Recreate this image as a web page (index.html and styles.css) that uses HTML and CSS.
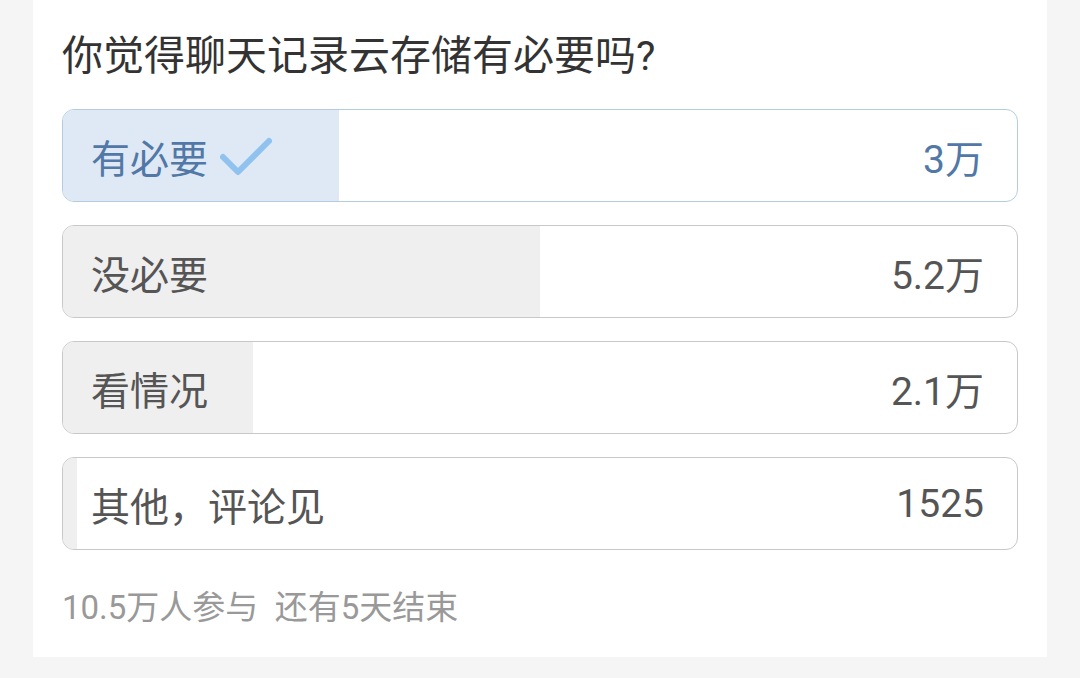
FILE: index.html
```html
<!DOCTYPE html>
<html>
<head>
  <meta charset="UTF-8">
  <title>投票</title>
  <link rel="stylesheet" href="styles.css">
</head>
<body>
  <div class="card">
    <h1 class="question">你觉得聊天记录云存储有必要吗?</h1>
    <div class="options">
      <!-- voted option -->
      <div class="option voted">
        <div class="fill" style="width:28.9%"></div>
        <span class="label">有必要
          <svg class="check" width="52" height="40" viewBox="0 0 52 40">
            <path d="M3 20 L18 35 L49 4" fill="none" stroke="#90c2f0" stroke-width="6" stroke-linecap="round" stroke-linejoin="round"/>
          </svg>
        </span>
        <span class="count">3万</span>
      </div>
      <div class="option">
        <div class="fill" style="width:50%"></div>
        <span class="label">没必要</span>
        <span class="count">5.2万</span>
      </div>
      <div class="option">
        <div class="fill" style="width:19.9%"></div>
        <span class="label">看情况</span>
        <span class="count">2.1万</span>
      </div>
      <div class="option">
        <div class="fill" style="width:1.5%"></div>
        <span class="label">其他，评论见</span>
        <span class="count">1525</span>
      </div>
    </div>
    <p class="meta">10.5万人参与&nbsp;&nbsp;还有5天结束</p>
  </div>
</body>
</html>
```

FILE: styles.css
```css
body {
  margin: 0;
  padding: 0;
  background-color: #f5f5f5;
  font-family: Roboto, "Noto Sans CJK SC", sans-serif;
}
.card {
  width: 1014px;
  height: 657px;
  margin-left: 33px;
  padding: 29px 29px 0 29px;
  box-sizing: border-box;
  background-color: #fff;
}
.question {
  margin: 0;
  font-size: 41px;
  font-weight: normal;
  line-height: 54px;
  color: #333;
}
.options {
  display: flex;
  flex-direction: column;
  gap: 23px;
  margin-top: 26px;
}
.option {
  position: relative;
  display: flex;
  align-items: center;
  justify-content: space-between;
  height: 93px;
  padding: 0 33px 0 28px;
  box-sizing: border-box;
  border: 1px solid #c8c8c8;
  border-radius: 12px;
  overflow: hidden;
  font-size: 39px;
  color: #555;
}
.fill {
  position: absolute;
  left: 0;
  top: 0;
  bottom: 0;
  background-color: #efefef;
}
.label, .count {
  position: relative;
  display: flex;
  align-items: center;
}
.option.voted {
  border-color: #b5cce0;
  color: #5178a6;
}
.option.voted .fill {
  background-color: #dfe9f5;
}
.check {
  margin-left: 12px;
  margin-top: 2px;
}
.meta {
  margin: 38px 0 0 0;
  font-size: 33px;
  line-height: 40px;
  color: #999;
}
```
